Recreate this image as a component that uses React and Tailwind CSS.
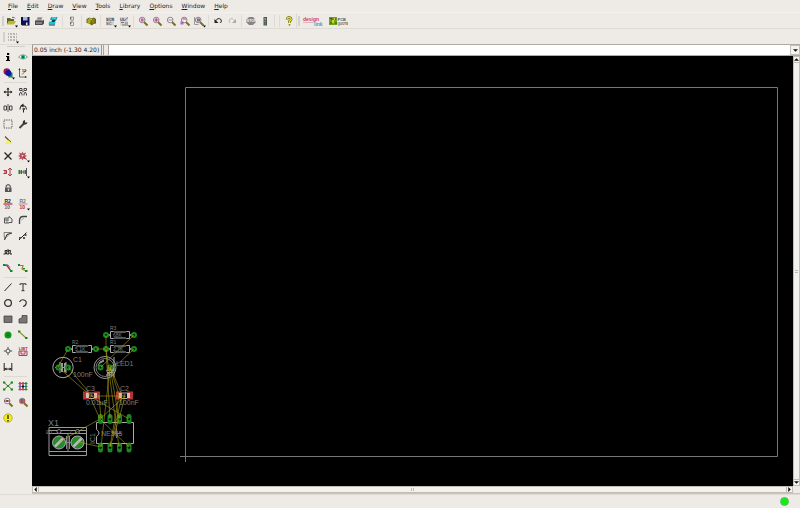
import React from 'react';

const K = '#222';
const G = '#168a16';
const R = '#b8283c';
const Y = '#b5a818';

const L = ({ d, c = K, w = 1, f = 'none' }) => <path d={d} stroke={c} strokeWidth={w} fill={f} />;
const F = ({ d, c = K }) => <path d={d} fill={c} />;
const T = ({ x = 0, y, s = 4, c = K, b = true, children }) => (
  <text x={x} y={y} fontSize={s} fill={c} fontWeight={b ? 700 : 400} fontFamily="Liberation Sans, sans-serif">{children}</text>
);
const more = <F d="M9 9.5h3l-1.5 2z" c="#000" />;

const lens = (mark, c = '#f4f0f2') => (
  <>
    <L d="M6 6l3.500 3.500" c="#77711c" w={2} />
    <circle cx="4.2" cy="4" r="2.8" fill={c} stroke="#8b878c" strokeWidth="1" />
    {mark}
  </>
);

const icons = {
  open: <><F d="M1 2h3l1 1h3v2H3L1 8.500z" c="#5f6420" /><F d="M3 5h7L8 8.500H1z" c="#b9b932" /><L d="M6 1.500q2-1 3 1" c="#444" w={0.8} />{more}</>,
  save: <><F d="M1 1h8.500v8.500H2L1 8.500z" c="#0c0c4e" /><F d="M3 1h4.500v3.500H3z" c="#9fb5e8" /><F d="M3 6h5v3H3z" c="#15154a" /><F d="M6 6.500h1.500v2.500H6z" c="#e8e8ee" /></>,
  print: <><F d="M3.500 1h5L7.500 5H2z" c="#aaa" /><F d="M1 4.500h8l1-1v4L8.500 9H1z" c="#4c4c4c" /><F d="M2 6.500h6v1H2z" c="#bbb" /><L d="M4 2.500h3" c="#666" w={0.6} /></>,
  cam: <><F d="M3 1h6.500L8.500 4H2z" c="#11a5bd" /><F d="M1 5.500h6.500L7 8.500H.5z" c="#14c5d3" /><F d="M4 4h4L6.500 6H3.500z" c="#123f53" /><F d="M1 8.500h6v1H1z" c="#29434a" /><F d="M4 1.500h4v1H4z" c="#76e6ec" /></>,
  board: <><L d="M3.500 1h3v3h-3zM3.500 6h3v3.500h-3zM5 4v2" c="#999" /><F d="M3 1.500h1.500v1H3zM3 6.500h1.500v1H3z" c="#444" /></>,
  lib: <><F d="M.5 3l3-1.500 2 1L8 1.500 10 3v4.500L7.500 8 6 9.500 3 7.500.5 7z" c="#66651a" /><F d="M1.500 3.500L4.500 3v4.500L1.500 7z" c="#b5ad13" /><F d="M5.500 4l3-1.500v4L6 8z" c="#8b8518" /><L d="M3 2.500l3 1.500" c="#ddd428" /></>,
  scr: <><F d="M1 1h8v8.500H1z" c="#d2d0cd" /><T x={1} y={4.800} s={4} c="#444">SCR</T><T x={1} y={9} s={4} c="#666">SC</T>{more}</>,
  ulp: <><F d="M1 1h8v8.500H1z" c="#d6d4d0" /><T x={1} y={4.800} s={4} c="#444">UL</T><L d="M6 4L9 1.500M2 6.500h3M6 7h3M3 9h6" c="#777" />{more}</>,
  zfit: lens(<F d="M3 2.500h2.500v3H3z" c="#c957b0" />, '#f3d9ef'),
  zin: lens(<L d="M2.500 4H6M4.200 2.200v3.500" c="#b5308e" w={1.2} />, '#f8e0ee'),
  zout: lens(<L d="M2.500 4H6" c="#c98bb4" w={1.2} />),
  zredraw: lens(<><L d="M2.500 3H6" c="#b5308e" /><F d="M.5 5.500h3v3h-3z" c="#bb62b0" /></>),
  zsel: <>{lens(<F d="M3 2.500h3v3H3z" c="#95609e" />, '#ddd')}<L d="M.5 1v7.500h4" c="#777" w={0.7} />{more}</>,
  undo: <><L d="M2.500 5Q5 1 8 3.500Q9 5 7.500 7" /><F d="M1.500 3v4h4z" /></>,
  redo: <><L d="M8 5Q5.500 1 2.500 3.500Q1.500 5 3 7" c="#bbb" /><F d="M9 3v4H5z" c="#aaa" /></>,
  stop: <><path d="M3 1h4l2.500 2.500v3L7 9H3L.5 6.500v-3z" fill="#858585" /><T x={0.8} y={6.400} s={3.500} c="#f4f4f4">STOP</T></>,
  go: <><F d="M3.500 1h3.500v8.500H3.500z" c="#4f5551" /><circle cx="5.2" cy="3" r="1" fill="#98a49b" /><circle cx="5.200" cy="5.500" r="1" fill="#759279" /><circle cx="5.200" cy="8" r="1" fill="#3b8f4b" /></>,
  help: <><L d="M3 3.500Q3 1.500 5 1.500T7.200 3.500Q7 4.500 5.500 5.200V7" c="#4d4b12" w={2.400} /><L d="M3 3.500Q3 1.500 5 1.500T7.200 3.500Q7 4.500 5.500 5.200V7" c="#e9e619" w={1.400} /><F d="M4.700 8h1.600v1.600H4.700z" c="#8b8618" /></>,
  grid: <><L d="M1 2h9M1 5h9M1 8h9" c="#777" w={1} /><L d="M2.500 1v8M5.500 1v8M8.500 1v8" c="#efede9" w={1.200} />{more}</>,

  info: <F d="M4 1h2.200v2H4zM3 4h3.200v4H7v1H3V8h1V5H3z" c="#000" />,
  show: <><path d="M.5 5Q5 .5 9.500 5Q5 9 .5 5z" fill="#eefcf7" stroke="#7fa96f" strokeWidth="1" /><circle cx="5" cy="5" r="2" fill="#13a29b" /><circle cx="5" cy="5" r=".8" fill="#124" /></>,
  layers: <><circle cx="3.800" cy="3.500" r="3.300" fill="#9c2050" /><F d="M4.500 4.500h5v5h-4z" c="#187a5a" /><circle cx="5.300" cy="5" r="3" fill="#1414a0" />{more}</>,
  mark: <><L d="M1.500 1v8H8M4 6.500L8.500 2" c="#666" /><F d="M.5 2l1-2 1 2zM7 8l2 1-2 1z" /><T x={4} y={4} s={3.500}>12</T></>,
  move: <><L d="M1 5h8M5 1v8" /><F d="M3.500 2.500h3L5 .5zM3.500 7.500h3L5 9.500zM2.500 3.500v3L.5 5zM7.500 3.500v3L9.500 5z" /></>,
  copy: <><L d="M1.500 1.500H4v2H1.500zM6 1.500h2.500v2H6zM1.500 8.500V7L2.700 5 4 7v1.500M6 8.500V7l1.200-2L8.500 7v1.500" c="#444" /><F d="M4.500 3.500l1.500 1-1.500 1z" /></>,
  mirror: <><L d="M1 3h2.500v4H1zM6.500 3H9v4H6.500z" c="#444" /><L d="M5 1v8" c="#333" w={0.8} /></>,
  rotate: <><L d="M2 6.500Q1.500 2.500 5 2.500Q8.500 2.500 8.500 6.500M5.500 5v4.500" /><F d="M5.500.5v4L2.500 2.500z" /><F d="M4.500 5h2.500v2H4.500z" c="#555" /></>,
  group: <path d="M1 1h8v8H1z" fill="none" stroke="#555" strokeDasharray="1.300 1" />,
  change: <><L d="M1.500 9L6 4.500" w={2} c="#444" /><path d="M5 5Q4 1.500 7 1v2.500h2.500Q9 6.500 5 5z" fill="#333" /></>,
  cut: <><L d="M2 1.500l5 5" c="#645b1b" w={1.200} /><F d="M4.500 5l3 1 2 3H1.500z" c="#f1ef62" /><L d="M6 5l2 2" c="#745f25" /></>,
  del: <L d="M1.500 1.500l7 7M8.500 1.500l-7 7" w={1.300} />,
  add: <><path d="M4.500.5l1 2 2.500-1-1 2.500 2 1-2 1 1 2.500-2.500-1-1 2-1-2-2.500 1 1-2.500-2-1 2-1-1-2.500 2.500 1z" fill="#b95059" /><F d="M3.800 4h1.500v1.500H3.800z" c="#eee" /><L d="M5 5.500l4 3" c="#444" w={0.8} />{more}</>,
  pin: <><L d="M.5 3.500h3v3h-3M1 5h3" c={R} /><L d="M7 1v8M5 3l2-2 2 2M5 7l2 2 2-2" c="#9f454e" /></>,
  replace: <><F d="M.5 3h2v4h-2zM7 3h2v4H7z" c={G} /><L d="M2.500 5h4M3.500 3v4M6 3v4M8.500 1v8" c="#555" />{more}</>,
  lock: <><path d="M2 4.500h6.500V9H2z" fill="#555" /><L d="M3.200 4.500V3Q5.200.2 7.200 3v1.500" c="#555" w={1.200} /><L d="M4.500 6h2M5.500 6v2" c="#ddd" w={0.8} /></>,
  name: <><T x={1.500} y={4.300} s={5}>R2</T><L d="M.5 5h9" c={R} w={1.200} /><T x={1.500} y={9.500} s={5} c="#8b5458">10</T></>,
  value: <><T x={1.500} y={4.300} s={5} c="#777">R2</T><L d="M.5 5h9" c="#d2969b" w={1.200} /><T x={1.500} y={9.500} s={5} c={R}>10</T>{more}</>,
  smash: <><L d="M1.500 3H6V1.500L9 4v3.500H6V8H1.500zM1 5h5" c="#555" /><L d="M4 3v5" c="#777" /></>,
  miter: <><L d="M1.500 9V5Q2 1.500 5 1.500H9" c="#444" w={1.300} /><L d="M3 5.500L6 3" c="#999" w={0.8} /></>,
  split: <><L d="M1.500 9L4 3.500 9 2" /><L d="M1 1.500h7L1.500 8z" c="#666" w={0.8} /></>,
  optimize: <><L d="M1 9l7.500-7.500" /><F d="M1 6h2v2H1zM6.500 3h2v2h-2zM5 6h2v2H5z" c="#555" /></>,
  meander: <L d="M.5 7h2L2 3.500h2L3.500 7M6 7l-.5-3.500h2L7 7h2M3.500 7H6M5 2v3" />,
  route: <><L d="M1 2l3 .5L8 8" c={R} w={1.300} /><L d="M2 1.800h3l2 3" c="#4163c9" w={0.8} /><F d="M0 1h2v2H0zM7 7h2.500v2H7z" c={G} /></>,
  ripup: <><L d="M1 2.500h4L4 6l4 2" c="#9d8638" w={1.200} /><F d="M0 1h2v2H0zM7 7h2.500v2H7zM5 5h2v1H5z" c={G} /></>,
  wire: <L d="M1.500 9l7-7.500" />,
  text: <L d="M2 3V1.800h6V3M5 2v7M3.500 8.700h3" c="#333" />,
  circle: <circle cx="5" cy="5" r="3.400" fill="none" stroke="#333" strokeWidth="1.300" />,
  arc: <L d="M1.500 4Q3 1 6 2T8 6Q7.500 8 5 8.500" c="#333" w={1.200} />,
  rect: <path d="M1 2h8v6.500H1z" fill="#747474" stroke="#444" strokeWidth=".8" />,
  polygon: <path d="M1 9V5l3-1V1.500h5V9z" fill="#777" stroke="#444" strokeWidth=".8" />,
  via: <><circle cx="5" cy="5" r="3.500" fill="#119718" /><circle cx="5" cy="5" r="1" fill="#08700e" /></>,
  signal: <><L d="M1.500 2l6 5.500" c="#88922e" w={1.100} /><F d="M0 .5h2.300v2H0zM7 7h2.500v2H7z" c={G} /></>,
  hole: <><circle cx="5" cy="5" r="2" fill="none" stroke="#555" /><L d="M5 .8V3M5 7v2.200M.8 5H3M7 5h2.200" c="#555" /></>,
  attribute: <><T x={0.700} y={4} s={4} c={R}>LIBT</T><path d="M1 5h8v4.500H1z" fill="#eedbdd" stroke="#8c4e56" /><L d="M3 5v3h4V5" c={R} w={0.8} /></>,
  dimension: <><L d="M1.200 1v8M8.800 1v8M1 7h8" /><F d="M1.500 7l2-1.500v3zM8.500 7l-2-1.500v3z" /></>,
  ratsnest: <><L d="M1 1.500l8 7M9 1.500l-8 7" c="#557d34" /><F d="M0 .5h2.300v2H0zM7.700.5H10v2H7.700zM0 7.500h2.300v2H0zM7.700 7.500H10v2H7.700zM4 4h2v2H4z" c={G} /></>,
  auto: <><L d="M2 1v8.500M5 1v8.500" c="#a8283c" w={1.300} /><L d="M.5 2.500h9M.5 5.500h9M.5 8.500h9" c="#5166b8" w={1} /><L d="M8 1v8.500" c={G} w={1.300} /><F d="M4 4.500h2v2H4z" c="#222" /></>,
  erc: lens(<><L d="M1 4h6" c="#555" /><F d="M3.200 3h2v2h-2z" c={R} /></>),
  drc: lens(<><L d="M2 3h5M2 5h5" c={R} /><L d="M4 2v4" c="#555" /></>, '#bc9a9f'),
  errors: <><circle cx="5" cy="5" r="4.200" fill="#f5ee14" stroke="#b4a31f" strokeWidth=".8" /><L d="M5 2v4M5 7v1.500" w={1.300} /></>,
};

function Tool({ name, size = 'w-3.5 h-4' }) {
  return (
    <button aria-label={name} className={`flex shrink-0 items-center justify-center ${size}`}>
      <svg viewBox="0 0 10 10" className="h-2.5 w-2.5 overflow-visible">{icons[name]}</svg>
    </button>
  );
}

const Sep = () => (
  <span className="flex w-[5px] shrink-0 justify-center"><span className="h-3 w-px bg-[#dedbd5]" /></span>
);
const Grip = () => <span className="h-2.5 w-[2px] shrink-0 bg-[#d5d1ca]" />;

const menus = ['File', 'Edit', 'Draw', 'View', 'Tools', 'Library', 'Options', 'Window', 'Help'];
const groups = [
  ['open', 'save', 'print', 'cam'], ['board'], ['lib'], ['scr', 'ulp'],
  ['zfit', 'zin', 'zout', 'zredraw', 'zsel'], ['undo', 'redo'], ['stop', 'go'],
];
const sideGroups = [
  ['info', 'show', 'layers', 'mark'],
  ['move', 'copy', 'mirror', 'rotate', 'group', 'change', 'cut', null, 'del', 'add', 'pin', 'replace', 'lock', null,
    'name', 'value', 'smash', 'miter', 'split', 'optimize', 'meander', null, 'route', 'ripup'],
  ['wire', 'text', 'circle', 'arc', 'rect', 'polygon', 'via', 'signal', 'hole', 'attribute', 'dimension', null],
  ['ratsnest', 'auto', 'erc', 'drc', 'errors'],
];

function Pad({ x, y }) {
  return <circle cx={x} cy={y} r="2" fill="#000" stroke="#168a1b" strokeWidth="2" />;
}

function Label({ x, y, s = 7, children }) {
  return <text x={x} y={y} fontSize={s} fill="#7d7d7d" stroke="none" fontFamily="Liberation Sans, sans-serif">{children}</text>;
}

function Resistor({ x, y, name, value }) {
  return (
    <g>
      <path d={`M${x} ${y}h28`} stroke="#aaa" strokeWidth="1.500" />
      <path d={`M${x + 4.500} ${y - 3.500}h3l1 .5h11l1-.5h3v7h-3l-1-.5h-11l-1 .5h-3z`} fill="#000" stroke="#aaa" />
      <Pad x={x} y={y} /><Pad x={x + 28} y={y} />
      <Label x={x + 4} y={y - 5} s={5}>{name}</Label>
      <Label x={x + 7} y={y + 2} s={5}>{value}</Label>
    </g>
  );
}

function Capacitor({ x, y }) {
  return (
    <g>
      <path d={`M${x} ${y - 4.500}h6v8h-6zM${x + 11} ${y - 4.500}h6v8h-6z`} fill="#b03434" />
      <path d={`M${x + 3} ${y - 3}h3v5h-3zM${x + 11} ${y - 3}h3v5h-3z`} fill="#d8bcbc" />
      <path d={`M${x + 6} ${y - 3}h5M${x + 6} ${y + 2.500}h5`} stroke="#aaa" />
      <path d={`M${x + 7.500} ${y - 2}h2v3h-2z`} fill="#555" />
    </g>
  );
}

function Board() {
  return (
    <svg viewBox="32 56 761 430" preserveAspectRatio="xMinYMin meet" className="block h-full w-full" fill="none">
      <path d="M185.500 87.500H777.500V456.500H185.500z" stroke="#777" />
      <path d="M180 456.500h11M185.500 451v11" stroke="#777" />

      <Resistor x={106} y={335} name="R3" value="68K" />
      <Resistor x={68} y={349} name="R2" value="5.1K" />
      <Resistor x={106} y={349} name="R1" value="2.7K" />

      <circle cx="63" cy="367.500" r="10.200" stroke="#aaa" />
      <path d="M55 367.500h16M60 362v11M66 362v11" stroke="#aaa" />
      <path d="M61 363h2v9h-2zM64 363h2v9h-2z" fill="#999" />
      <Pad x={58.500} y={367.500} /><Pad x={68} y={367.500} />
      <Label x={73} y={362}>C1</Label>
      <Label x={73} y={377}>100nF</Label>

      <circle cx="105" cy="367.500" r="11" stroke="#999" />
      <circle cx="105" cy="367.500" r="9" stroke="#777" />
      <path d="M98 366q1-5 6-6M107 374q6-1 6-6M106 371q4-1 5-4M100 363l4-2M114 357v20M107 370h7M107 372.500h6M106 375h6" stroke="#aaa" />
      <Pad x={100.500} y={367.500} /><Pad x={110} y={367.500} />
      <Label x={116} y={366}>LED1</Label>

      <Capacitor x={83} y={396} />
      <Capacitor x={116} y={396} />
      <Label x={86} y={391}>C3</Label>
      <Label x={120} y={391}>C2</Label>
      <Label x={86} y={405}>0.01uF</Label>
      <Label x={119} y={405}>100nF</Label>

      <path d="M96.500 422.500h37v21h-37v-7q5-3.500 0-7z" stroke="#aaa" />
      {[100.5, 110, 119.5, 129].map((x) => (
        <g key={x}>
          <rect x={x - 2.500} y="414" width="5" height="10" rx="2.500" fill="#1c8620" />
          <rect x={x - 2.500} y="442.500" width="5" height="10" rx="2.500" fill="#1c8620" />
          <circle cx={x} cy="419" r="1.200" fill="#000" />
          <circle cx={x} cy="447.500" r="1.200" fill="#000" />
        </g>
      ))}
      <Label x={101} y={436}>NE555</Label>
      <text x="0" y="0" transform="translate(95 444) rotate(-90)" fontSize="7" fill="#7d7d7d" fontFamily="Liberation Sans, sans-serif">IC1</text>

      <path d="M49 427.500h37.500v28H49zM49 433.500h37.500M49 451.500h37.500M49 430.500h37.500" stroke="#999" />
      <circle cx="59" cy="431.500" r="2" fill="#000" stroke="#888" />
      <circle cx="77.500" cy="431.500" r="2" fill="#000" stroke="#888" />
      <Label x={46} y={434} s={5}>Ø1</Label>
      <Label x={69} y={434} s={5}>2</Label>
      <path d="M68 434v17M65 442.500h6M66.500 436v13M69.500 436v13" stroke="#888" />
      {[59, 77.5].map((x) => (
        <g key={x}>
          <circle cx={x} cy="442.500" r="6.500" fill="#28882c" stroke="#aaa" />
          <path d={`M${x - 4} 446.500l8-8`} stroke="#bababa" strokeWidth="2.500" />
        </g>
      ))}
      <Label x={48} y={426} s={9}>X1</Label>

      <path
        d="M58 367L68 349M58 367L84 390 98 401 129 419M68 367L87 390 100 419M96 349h10M106 335V349L110 419M106 349L119 447M134 335L101 367M134 349L120 362 110 367 119 419M110 367L101 447M110 367L122 395M110 367L119 395 110 447M91 396H125L100 419M122 395L113 435M99 396L101 419M125 396L119 419M59 442L100 419M78 442L101 447M100 419L129 447M119 419L110 447"
        stroke={Y} strokeWidth=".8" strokeOpacity=".7"
      />
      <path d="M112 433.500h9M116.500 429v9" stroke="#777" />
    </svg>
  );
}

function Arrow({ d, label, size }) {
  return (
    <button aria-label={label} className={`flex shrink-0 items-center justify-center border border-[#c2beb7] bg-[#f5f3f0] ${size}`}>
      <svg viewBox="0 0 6 6" className="h-[5px] w-[5px] shrink-0"><path d={d} fill="#111" /></svg>
    </button>
  );
}

export default function App() {
  return (
    <div className="flex h-screen flex-col overflow-hidden bg-[#eeebe7] font-['DejaVu_Sans',sans-serif] text-[6px] leading-[8px] text-[#222]">
      <nav className="flex h-3 shrink-0 items-center gap-[9px] px-2">
        {menus.map((m) => (
          <button key={m}><span className="underline">{m[0]}</span>{m.slice(1)}</button>
        ))}
      </nav>

      <div className="flex h-[17px] shrink-0 items-center border-y border-t-[#f4f2ef] border-b-[#dedbd5] pl-[2px]">
        <Grip />
        {groups.map((g, i) => (
          <React.Fragment key={g[0]}>
            {i > 0 && <Sep />}
            {g.map((n) => <Tool key={n} name={n} />)}
          </React.Fragment>
        ))}
        <Sep /><Sep />
        <Tool name="help" />
        <span className="mr-px h-full w-px bg-[#dedbd5]" />
        <Grip />
        <button aria-label="designlink" className="ml-0.5 h-3 w-6">
          <svg viewBox="0 0 24 12" className="h-3 w-6">
            <text x="1" y="6" fontSize="5" fontWeight="700" fill="#c94166" fontFamily="Liberation Sans, sans-serif">design</text>
            <text x="12" y="10.500" fontSize="5" fontWeight="700" fill="#4b9bc0" fontFamily="Liberation Sans, sans-serif">link</text>
            <path d="M1 7.500h11" stroke="#dc8ba0" strokeWidth=".6" />
          </svg>
        </button>
        <button aria-label="pcb quote" className="ml-0.5 h-3 w-5">
          <svg viewBox="0 0 20 12" className="h-3 w-5">
            <path d="M1 2h8v8H1z" fill="#6fa51d" />
            <path d="M2 3.500h2v2M7 3v2M2 8h2M7 8h2" stroke="#33590e" fill="none" />
            <path d="M4 5h2v3H4zM6 3h1v2H6z" fill="#d5cf31" />
            <text x="9.500" y="5.500" fontSize="4" fontWeight="700" fill="#555" fontFamily="Liberation Sans, sans-serif">PCB</text>
            <text x="9.500" y="9.500" fontSize="3" fontWeight="700" fill="#555" fontFamily="Liberation Sans, sans-serif">QUOTE</text>
          </svg>
        </button>
      </div>

      <div className="flex h-[15px] shrink-0 items-center pl-[3px]">
        <Grip />
        <Tool name="grid" />
      </div>

      <div className="flex min-h-0 flex-1">
        <aside className="flex w-8 shrink-0 flex-col border-t border-[#dedbd5] pr-px">
          <span className="mx-auto mt-px mb-0.5 h-px w-[18px] shrink-0 bg-[#d0ccc5]" />
          {sideGroups.map((g, i) => (
            <React.Fragment key={g[0]}>
              {i > 0 && <span className="mx-1 my-px h-px shrink-0 bg-[#dcd8d2]" />}
              <div className="grid grid-cols-2">
                {g.map((n, j) => (n ? <Tool key={n} name={n} size="h-4 w-full" /> : <span key={j} />))}
              </div>
            </React.Fragment>
          ))}
        </aside>

        <main className="flex min-w-0 flex-1 flex-col">
          <div className="flex h-3 shrink-0 border-y border-[#b0aca5]">
            <output className="flex shrink-0 items-center border-x border-[#9c9993] px-px pr-0.5 whitespace-pre">0.05 inch (-1.30 4.20)</output>
            <span className="ml-px w-1.5 shrink-0 border-x border-[#aaa69e]" />
            <input aria-label="Command" className="min-w-0 flex-1 bg-white px-1 outline-none" />
            <Arrow label="History" d="M0 1.500h6L3 4.500z" size="w-2.5 h-full" />
          </div>
          <div className="flex min-h-0 flex-1">
            <div className="min-w-0 flex-1 bg-black"><Board /></div>
            <div className="flex w-[7px] shrink-0 flex-col bg-[#eeebe7]">
              <Arrow label="Scroll up" d="M0 4.500h6L3 1.500z" size="h-[7px] w-[7px]" />
              <div className="flex flex-1 flex-col items-center justify-center gap-px border-x border-[#c2beb7] bg-[#f3f1ed]">
                <span className="h-px w-[3px] bg-[#bbb]" /><span className="h-px w-[3px] bg-[#bbb]" />
              </div>
              <Arrow label="Scroll down" d="M0 1.500h6L3 4.500z" size="h-[7px] w-[7px]" />
            </div>
          </div>
          <div className="flex h-2 shrink-0 border-b border-[#c9c5be] pr-[7px]">
            <Arrow label="Scroll left" d="M4.500 0v6L1.500 3z" size="h-[7px] w-[7px]" />
            <div className="flex flex-1 items-center justify-center gap-px border-y border-[#c2beb7] bg-[#f3f1ed]">
              <span className="h-[3px] w-px bg-[#bbb]" /><span className="h-[3px] w-px bg-[#bbb]" />
            </div>
            <Arrow label="Scroll right" d="M1.500 0v6L4.500 3z" size="h-[7px] w-[7px]" />
          </div>
        </main>
      </div>

      <footer className="flex h-3.5 shrink-0 items-center justify-end border-t border-[#dedbd5] pr-[11px]">
        <span className="h-[9px] w-[9px] rounded-full border border-[#67b867] bg-[#10ed17]" />
      </footer>
    </div>
  );
}
